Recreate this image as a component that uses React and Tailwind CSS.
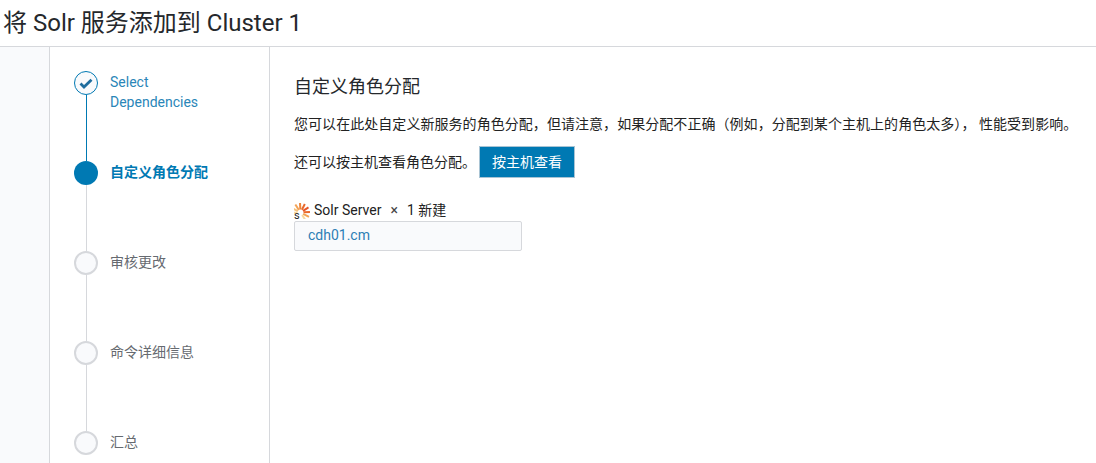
const steps = [
  { label: 'Select Dependencies', state: 'done' },
  { label: '自定义角色分配', state: 'active' },
  { label: '审核更改', state: 'todo' },
  { label: '命令详细信息', state: 'todo' },
  { label: '汇总', state: 'todo' },
];

function Circle({ state }) {
  if (state === 'done') {
    return (
      <div className="w-6 h-6 shrink-0 rounded-full border border-[#0079b3] bg-[#f9fafc] flex items-center justify-center">
        <svg width="14" height="11" viewBox="0 0 14 11" fill="none">
          <path d="M1.5 5.5 L5 9 L12.5 1.8" stroke="#1f6d9e" strokeWidth="2.8" />
        </svg>
      </div>
    );
  }
  if (state === 'active') return <div className="w-6 h-6 shrink-0 rounded-full bg-[#0079b3]" />;
  return <div className="w-6 h-6 shrink-0 rounded-full border-2 border-[#d6d8dc] bg-[#f9fafc]" />;
}

function Step({ step, last }) {
  const line = step.state === 'done' ? 'bg-[#0079b3]' : 'bg-[#d6d8dc]';
  const text =
    step.state === 'done'
      ? 'text-[#2a86b8] font-normal w-[110px]'
      : step.state === 'active'
        ? 'text-[#0079b3] font-bold'
        : 'text-[#666a70]';
  return (
    <div className="flex h-[90px] gap-3">
      <div className="flex flex-col items-center w-6 shrink-0">
        <Circle state={step.state} />
        {!last && <div className={`w-px flex-1 ${line}`} />}
      </div>
      <div className={`text-[14px] leading-[20px] mt-[1px] ${text}`}>{step.label}</div>
    </div>
  );
}

function SolrIcon() {
  const rays = [];
  const cols = ['#f7d9a0', '#f6c27a', '#f3a355', '#ee8438', '#e9692c', '#e5562a', '#e9692c', '#f3a355', '#f7d9a0'];
  for (let i = 0; i < 9; i++) {
    const a = (-200 + i * 30) * (Math.PI / 180) + 0.3;
    rays.push(
      <line
        key={i}
        x1={6.5 + Math.cos(a) * 3}
        y1={10.5 + Math.sin(a) * 3}
        x2={6.5 + Math.cos(a) * 9.5}
        y2={10.5 + Math.sin(a) * 9.5}
        stroke={cols[i]}
        strokeWidth="2"
      />
    );
  }
  return (
    <span className="relative inline-block w-[16px] h-[17px] shrink-0">
      <svg width="16" height="17" viewBox="0 0 16 17">{rays}</svg>
      <span className="absolute left-0 bottom-[-3px] text-[11px] leading-[12px] text-[#222]">s</span>
    </span>
  );
}

export default function App() {
  return (
    <div className="w-[1096px] h-[463px] overflow-hidden bg-white text-[#222] flex flex-col font-['Roboto','Noto_Sans_CJK_SC',sans-serif]">
      <header className="h-[47px] shrink-0 border-b border-[#d6d8dc] pl-[3px] pt-[6px] text-[24px] leading-[34px] text-[#25282c]">
        将 Solr 服务添加到 Cluster 1
      </header>
      <div className="flex flex-1 min-h-0">
        <div className="w-[50px] shrink-0 bg-[#f9fafc] border-r border-[#d6d8dc]" />
        <aside className="w-[220px] shrink-0 border-r border-[#d6d8dc] pl-6 pt-6 overflow-hidden">
          {steps.map((s, i) => (
            <Step key={i} step={s} last={i === steps.length - 1} />
          ))}
        </aside>
        <main className="flex-1 pl-6 pt-[28px]">
          <h2 className="text-[18px] leading-[24px] text-[#25282c]">自定义角色分配</h2>
          <p className="mt-[15px] text-[14px] leading-[20px] whitespace-nowrap tracking-[0.05px]">
            您可以在此处自定义新服务的角色分配，但请注意，如果分配不正确（例如，分配到某个主机上的角色太多），&nbsp;性能受到影响。
          </p>
          <div className="mt-[12px] flex items-center gap-[3px] h-[32px] text-[14px]">
            <span>还可以按主机查看角色分配。</span>
            <button className="w-[96px] h-[32px] bg-[#0079b3] border border-[#a9c4d4] text-white text-[14px]">按主机查看</button>
          </div>
          <div className="mt-[22px] flex items-center gap-[4px] h-[20px] text-[14px]">
            <SolrIcon />
            <span>Solr Server</span>
            <span className="ml-[5px] text-[#444]">×</span>
            <span className="ml-[5px]">1 新建</span>
          </div>
          <div className="w-[228px] h-[30px] mt-[1px] pl-[13px] bg-[#f9fafc] border border-[#d6d8dc] rounded-[2px] text-[14px] leading-[27px] text-[#2d7fb5]">
            cdh01.cm
          </div>
        </main>
      </div>
    </div>
  );
}
